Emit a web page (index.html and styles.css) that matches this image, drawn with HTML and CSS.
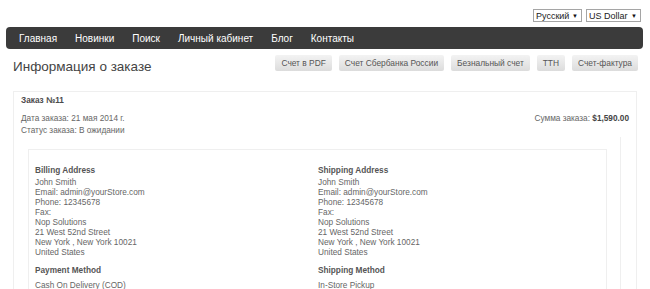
FILE: index.html
```html
<!DOCTYPE html>
<html lang="ru">
<head>
<meta charset="utf-8">
<title>Информация о заказе</title>
<link rel="stylesheet" href="styles.css">
</head>
<body>
<div class="page">
  <div class="top">
    <div class="select sel-lang"><span>Русский</span><span class="arrow">▼</span></div>
    <div class="select sel-cur"><span>US Dollar</span><span class="arrow">▼</span></div>
  </div>
  <nav class="nav">
    <a>Главная</a>
    <a>Новинки</a>
    <a>Поиск</a>
    <a>Личный кабинет</a>
    <a>Блог</a>
    <a>Контакты</a>
  </nav>
  <div class="content">
    <div class="title-row">
      <h1 class="title">Информация о заказе</h1>
      <div class="buttons">
        <span class="btn">Счет в PDF</span>
        <span class="btn">Счет Сбербанка России</span>
        <span class="btn">Безнальный счет</span>
        <span class="btn">ТТН</span>
        <span class="btn">Счет-фактура</span>
      </div>
    </div>
    <div class="order">
      <div class="order-head">
        <div class="order-num">Заказ №11</div>
        <div class="order-line"><span>Дата заказа: 21 мая 2014 г.</span><span>Сумма заказа: <b>$1,590.00</b></span></div>
        <div class="order-line"><span>Статус заказа: В ожидании</span></div>
      </div>
      <div class="details">
        <div class="info-box">
          <div class="col">
            <div class="head">Billing Address</div>
            <div class="lines">
              <div>John Smith</div>
              <div>Email: admin@yourStore.com</div>
              <div>Phone: 12345678</div>
              <div>Fax:</div>
              <div>Nop Solutions</div>
              <div>21 West 52nd Street</div>
              <div>New York , New York 10021</div>
              <div>United States</div>
            </div>
            <div class="head method">Payment Method</div>
            <div class="lines">Cash On Delivery (COD)</div>
          </div>
          <div class="col">
            <div class="head">Shipping Address</div>
            <div class="lines">
              <div>John Smith</div>
              <div>Email: admin@yourStore.com</div>
              <div>Phone: 12345678</div>
              <div>Fax:</div>
              <div>Nop Solutions</div>
              <div>21 West 52nd Street</div>
              <div>New York , New York 10021</div>
              <div>United States</div>
            </div>
            <div class="head method">Shipping Method</div>
            <div class="lines">In-Store Pickup</div>
          </div>
        </div>
      </div>
    </div>
  </div>
</div>
</body>
</html>
```

FILE: styles.css
```css
html, body {
  margin: 0;
  padding: 0;
  background: #fff;
  overflow: hidden;
}
body {
  font-family: "Liberation Sans", Arial, sans-serif;
  color: #666;
}
.page {
  padding: 0 7px 0 6px;
}
.top {
  display: flex;
  justify-content: flex-end;
  gap: 4px;
  padding-top: 9px;
  padding-right: 2px;
}
.select {
  display: flex;
  align-items: center;
  justify-content: space-between;
  box-sizing: border-box;
  height: 13px;
  border: 1px solid #a5a5a5;
  padding: 0 3px 0 2px;
  font-size: 9px;
  color: #222;
  white-space: nowrap;
}
.sel-lang { width: 49px; }
.sel-cur { width: 55px; }
.select .arrow {
  font-size: 6px;
  color: #111;
}
.nav {
  margin-top: 5px;
  height: 22px;
  background: #3b3b3b;
  border-radius: 4px;
  display: flex;
  align-items: center;
  gap: 18px;
  padding-left: 13px;
}
.nav a {
  color: #fff;
  font-size: 10px;
}
.content {
  padding: 0 6px 0 7px;
}
.title-row {
  display: flex;
  justify-content: space-between;
  align-items: flex-start;
  margin-top: 6px;
}
.title {
  margin: 3px 0 0 0;
  font-size: 13.5px;
  font-weight: normal;
  color: #444;
  line-height: 17px;
}
.buttons {
  display: flex;
  gap: 7px;
  margin-right: -1px;
}
.btn {
  display: flex;
  align-items: center;
  height: 16px;
  padding: 0 6px;
  background: linear-gradient(#f3f3f3, #dcdcdc);
  border-radius: 2px;
  font-size: 8.4px;
  color: #555;
  white-space: nowrap;
}
.order {
  margin-top: 16px;
  border: 1px solid #efefef;
  border-bottom: none;
  font-size: 8.25px;
}
.order-head {
  padding: 3px 7px 0 7px;
  line-height: 12px;
}
.order-num {
  font-weight: bold;
  color: #4a4a4a;
  margin-bottom: 6px;
}
.order-line {
  display: flex;
  justify-content: space-between;
}
.order-line b {
  color: #444;
}
.details {
  margin-right: 15px;
  border-right: 1px solid #efefef;
  padding: 12px 13px 0 14px;
}
.info-box {
  display: grid;
  grid-template-columns: 283px 1fr;
  border: 1px solid #efefef;
  border-bottom: none;
  padding-top: 16px;
  height: 200px;
}
.col {
  padding-left: 6px;
  line-height: 10px;
}
.head {
  font-weight: bold;
  color: #555;
  margin-bottom: 2px;
}
.head.method {
  margin-top: 8px;
  margin-bottom: 5px;
}
```
